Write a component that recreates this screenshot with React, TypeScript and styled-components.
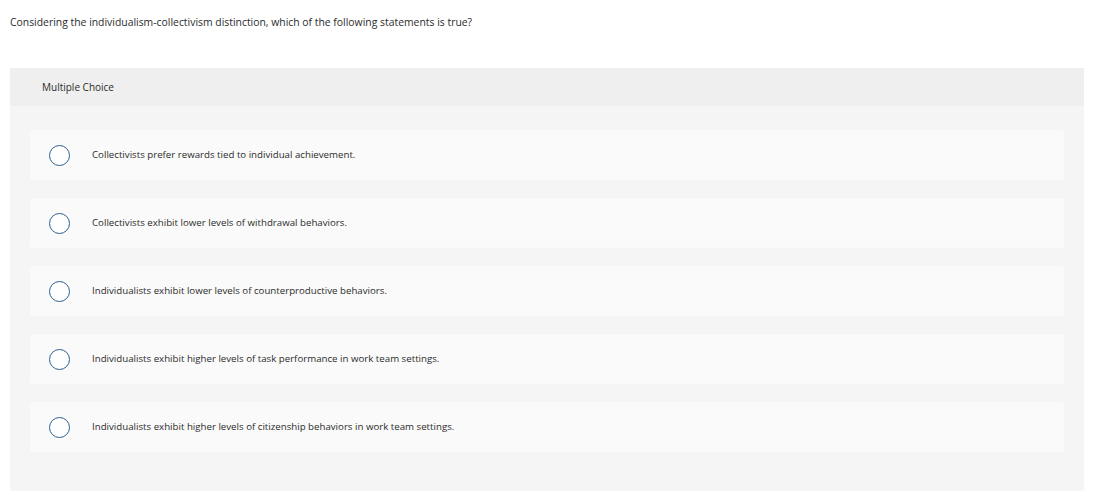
import React from "react";
import styled, { createGlobalStyle } from "styled-components";

const GlobalStyle = createGlobalStyle`
    body {
        margin: 0;
        background: #ffffff;
        font-family: "Open Sans", "Liberation Sans", sans-serif;
        color: #333333;
    }
`;

// Styled Components ======================================================

const Page = styled.div`
    padding: 15px 35px 0 10px;
`;

const Prompt = styled.p`
    margin: 0;
    font-size: 10.4px;
    line-height: 14px;
    color: #2b2b2b;
`;

const Panel = styled.section`
    margin-top: 39px;
    background: #f5f5f5;
    border-radius: 2px;
    padding-bottom: 39px;
`;

const PanelHeader = styled.div`
    height: 38px;
    display: flex;
    align-items: center;
    padding-left: 32px;
    background: #efefef;
    font-size: 10px;
    color: #2b2b2b;
`;

const OptionList = styled.div`
    display: flex;
    flex-direction: column;
    gap: 18px;
    padding: 24px 20px 0 20px;
`;

const Option = styled.label`
    height: 50px;
    display: flex;
    align-items: center;
    background: #fafafa;
    border-radius: 3px;
    padding-left: 19px;
    cursor: pointer;
`;

const Radio = styled.span`
    width: 19px;
    height: 19px;
    flex-shrink: 0;
    border: 1.6px solid #2d5f92;
    border-radius: 50%;
    background: #ffffff;
`;

const OptionText = styled.span`
    margin-left: 22px;
    margin-top: -1px;
    font-size: 9.7px;
    color: #2b2b2b;
`;
// =========================================================================

const choices = [
    "Collectivists prefer rewards tied to individual achievement.",
    "Collectivists exhibit lower levels of withdrawal behaviors.",
    "Individualists exhibit lower levels of counterproductive behaviors.",
    "Individualists exhibit higher levels of task performance in work team settings.",
    "Individualists exhibit higher levels of citizenship behaviors in work team settings.",
];

export default function App() {
    return (
        <Page>
            <GlobalStyle />
            <Prompt>
                Considering the individualism-collectivism distinction, which of the following statements is true?
            </Prompt>
            <Panel>
                <PanelHeader>Multiple Choice</PanelHeader>
                <OptionList>
                    {choices.map((c) => (
                        <Option key={c}>
                            <Radio />
                            <OptionText>{c}</OptionText>
                        </Option>
                    ))}
                </OptionList>
            </Panel>
        </Page>
    );
}
